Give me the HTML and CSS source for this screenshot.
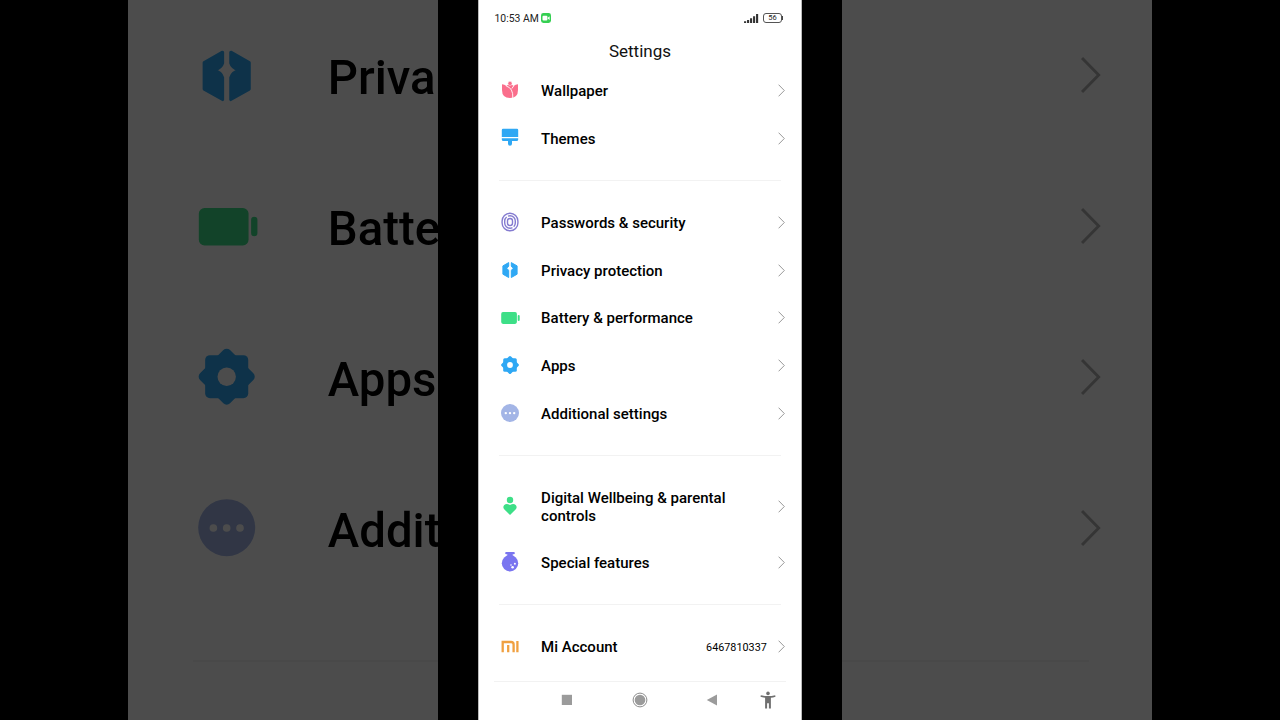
FILE: index.html
```
<!DOCTYPE html>
<html lang="en">

<head>
    <meta charset="UTF-8">
    <title>Settings</title>
    <link rel="stylesheet" href="styles.css">
</head>

<body>
    <!-- Icons used more than once -->
    <svg class="defs" width="0" height="0">
        <symbol id="privacy" viewBox="-10 -10 20 20">
            <path fill="#2fa8f4" stroke="#2fa8f4" stroke-width="1" stroke-linejoin="round"
                d="M-1.3-7.4L-7.1-4.1V4.2L-1.3 7.5V.6Q-1.7-1-4-1.7Q-1.7-2.5-1.3-4ZM1.3-7.4L7.1-4.1V4.2L1.3 7.5V.6Q1.7-1 4-1.7Q1.7-2.5 1.3-4Z" />
        </symbol>
        <symbol id="battery" viewBox="-10 -10 20 20">
            <rect x="-8.8" y="-5.9" width="15.7" height="11.8" rx="1.8" fill="#3ddf87" />
            <rect x="7.7" y="-3.1" width="2" height="6.1" rx="1" fill="#3ddf87" />
        </symbol>
        <symbol id="gear" viewBox="-10 -10 20 20">
            <g fill="#2fa8f4">
                <rect x="-6.8" y="-6.8" width="13.6" height="13.6" rx="1.5" />
                <rect x="-6.7" y="-6.7" width="13.4" height="13.4" rx="1.5" transform="rotate(45)" />
            </g>
            <circle r="2.9" fill="#fff" />
        </symbol>
        <symbol id="dots" viewBox="-10 -10 20 20">
            <circle r="9" fill="#a3b5e6" />
            <g fill="#fff">
                <circle cx="-4.2" cy=".1" r="1.2" />
                <circle cx="0" cy=".1" r="1.2" />
                <circle cx="4.2" cy=".1" r="1.2" />
            </g>
        </symbol>
        <symbol id="arrow" viewBox="0 0 7 13">
            <path d="M.6 .7L6.3 6.5L.6 12.3" fill="none" stroke="currentColor" stroke-width="1" />
        </symbol>
    </svg>

    <div class="stage">
        <div class="side side-left">
            <div class="big-row"><svg class="big-icon"><use href="#privacy" /></svg><span>Priva</span></div>
            <div class="big-row"><svg class="big-icon"><use href="#battery" /></svg><span>Batte</span></div>
            <div class="big-row"><svg class="big-icon"><use href="#gear" /></svg><span>Apps</span></div>
            <div class="big-row"><svg class="big-icon"><use href="#dots" /></svg><span>Addit</span></div>
            <div class="big-line"></div>
        </div>

        <div class="phone">
            <div class="status">
                <span class="time">10:53 AM</span>
                <svg class="cam" viewBox="0 0 10 10">
                    <rect width="10" height="10" rx="2.4" fill="#35cf52" />
                    <rect x="1.5" y="2.7" width="4.9" height="4.7" rx="1" fill="#fff" />
                    <path d="M6.7 4.7L8.6 3.3V6.9L6.7 5.5Z" fill="#fff" />
                </svg>
                <svg class="signal" viewBox="0 0 15 10">
                    <path d="M1.1 10V8.3M4.1 10V7M7.1 10V5.2M10.1 10V3.2M13.1 10V1" stroke="#333" stroke-width="2.1" />
                </svg>
                <div class="charge">56</div>
                <div class="charge-tip"></div>
            </div>
            <h1>Settings</h1>

            <div class="row">
                <svg class="icon" viewBox="-10 -10 20 20">
                    <path fill="#fa6e8c" d="M-8-5.7Q-5.5-5.5-3.6-4Q-2-5.4 0-5.4T3.6-4Q5.5-5.5 8-5.7V0Q8 8 0 8T-8 0Z" />
                    <path d="M-3.8-4Q3.4-2 2.8 8.2M3.8-4.2L1.8-1.4" fill="none" stroke="#fff" stroke-width=".9" />
                    <circle cx="0" cy="-6.6" r="2.1" fill="#fa6e8c" stroke="#fff" stroke-width=".5" />
                </svg>
                <span>Wallpaper</span><svg class="arrow"><use href="#arrow" /></svg>
            </div>
            <div class="row">
                <svg class="icon" viewBox="-10 -10 20 20">
                    <g fill="#2fa8f4">
                        <path d="M-8.2-8Q-8.2-9.2-7-9.2H7Q8.2-9.2 8.2-8V-.9H-8.2Z" />
                        <path d="M-8.2 .3H8.2V1.5Q8.2 3.1 6.6 3.1H2V5.8Q2 7.8 0 7.8T-2 5.8V3.1H-6.6Q-8.2 3.1-8.2 1.5Z" />
                    </g>
                </svg>
                <span>Themes</span><svg class="arrow"><use href="#arrow" /></svg>
            </div>
            <div class="line"></div>

            <div class="row">
                <svg class="icon" viewBox="-10 -10 20 20">
                    <g fill="none" stroke="#847bd0" stroke-width="1.4">
                        <rect x="-7.9" y="-8.8" width="15.8" height="17.6" rx="7.9" />
                        <rect x="-5.3" y="-6.2" width="10.6" height="12.4" rx="5.3" stroke-dasharray="14 1.5 17 1.5" />
                        <rect x="-2.5" y="-3.5" width="5" height="7" rx="2.5" />
                    </g>
                </svg>
                <span>Passwords &amp; security</span><svg class="arrow"><use href="#arrow" /></svg>
            </div>
            <div class="row"><svg class="icon"><use href="#privacy" /></svg><span>Privacy protection</span><svg class="arrow"><use href="#arrow" /></svg></div>
            <div class="row"><svg class="icon"><use href="#battery" /></svg><span>Battery &amp; performance</span><svg class="arrow"><use href="#arrow" /></svg></div>
            <div class="row"><svg class="icon"><use href="#gear" /></svg><span>Apps</span><svg class="arrow"><use href="#arrow" /></svg></div>
            <div class="row"><svg class="icon"><use href="#dots" /></svg><span>Additional settings</span><svg class="arrow"><use href="#arrow" /></svg></div>
            <div class="line"></div>

            <div class="row tall">
                <svg class="icon" viewBox="-10 -10 20 20">
                    <g fill="#3ddf87">
                        <circle cx="0" cy="-6" r="3.2" />
                        <path d="M0 9L-5.8 3.3C-8.4 .2-4.6-4 0-.9C4.6-4 8.4 .2 5.8 3.3Z" />
                    </g>
                </svg>
                <span>Digital Wellbeing &amp; parental controls</span><svg class="arrow"><use href="#arrow" /></svg>
            </div>
            <div class="row">
                <svg class="icon" viewBox="-10 -10 20 20">
                    <g fill="#7a75f0">
                        <rect x="-4.8" y="-10" width="9.6" height="2.2" rx=".9" />
                        <rect x="-2.7" y="-9" width="5.4" height="4" />
                        <circle cx="0" cy="1.2" r="8.2" />
                    </g>
                    <g fill="#fff">
                        <circle cx="4.9" cy="1.8" r="1" />
                        <circle cx="1" cy="3" r=".8" />
                        <circle cx="2.6" cy="5.2" r="1.3" />
                    </g>
                </svg>
                <span>Special features</span><svg class="arrow"><use href="#arrow" /></svg>
            </div>
            <div class="line"></div>

            <div class="row">
                <svg class="icon" viewBox="-10 -10 20 20">
                    <path d="M-7.3 5.2V-5H1Q3.6-5 3.6-2.4V5.2M-1.8 5.2V-2M7.4 5.2V-6.1" fill="none" stroke="#f0a040" stroke-width="2.3" />
                </svg>
                <span>Mi Account</span><em>6467810337</em><svg class="arrow"><use href="#arrow" /></svg>
            </div>

            <div class="nav">
                <svg width="12" height="12"><rect x=".8" y=".8" width="10.2" height="10.2" fill="#9b9b9b" /></svg>
                <svg width="16" height="16">
                    <circle cx="8" cy="8" r="6.9" fill="none" stroke="#8d8d8d" />
                    <circle cx="8" cy="8" r="5.3" fill="#9b9b9b" />
                </svg>
                <svg width="12" height="12"><path d="M.8 6L11 .4V11.6Z" fill="#9b9b9b" /></svg>
                <svg width="16" height="18" fill="#707070">
                    <circle cx="8" cy="2.4" r="1.8" />
                    <path d="M.8 4.2Q8 6 15.2 4.2L15.5 5.7Q13 6.5 10.9 6.7V17.4H8.9V12.3H7.1V17.4H5.1V6.7Q3 6.5 .5 5.7Z" />
                </svg>
            </div>
        </div>

        <div class="side side-right">
            <div class="big-row"><svg class="big-arrow"><use href="#arrow" /></svg></div>
            <div class="big-row"><svg class="big-arrow"><use href="#arrow" /></svg></div>
            <div class="big-row"><svg class="big-arrow"><use href="#arrow" /></svg></div>
            <div class="big-row"><svg class="big-arrow"><use href="#arrow" /></svg></div>
            <div class="big-line"></div>
        </div>
    </div>
</body>

</html>
```
FILE: styles.css
```
* {
    box-sizing: border-box;
}

body {
    margin: 0;
    background-color: #000;
    font-family: Roboto, sans-serif;
    color: #000;
}

svg {
    display: block;
    flex-shrink: 0;
}

.defs {
    position: absolute;
}

.stage {
    display: flex;
    justify-content: center;
    gap: 40px;
    height: 720px;
    overflow: hidden;
}

/* dimmed side panels */
.side {
    width: 310px;
    background-color: #fff;
    filter: brightness(0.3);
    overflow: hidden;
}

.big-row {
    display: flex;
    align-items: center;
    height: 150.8px;
    font-size: 47.4px;
    font-weight: 500;
    white-space: nowrap;
}

.side-left .big-row {
    padding-left: 67px;
}

.big-row span {
    margin-left: 69.4px;
    padding-top: 6px;
}

.big-icon {
    width: 63.4px;
    height: 63.4px;
}

.side-right .big-row {
    justify-content: flex-end;
    padding-right: 51.5px;
}

.big-arrow {
    width: 21px;
    height: 38px;
    color: #b0b0b0;
}

.big-line {
    height: 2px;
    margin-top: 57px;
    background-color: #f3f3f3;
}

.side-left .big-line {
    margin-left: 65px;
}

.side-right .big-line {
    margin-right: 63px;
}

.phone {
    width: 324px;
    background-color: #fff;
    border-left: 1px solid #bbb;
    border-right: 1px solid #bbb;
}

.status {
    display: flex;
    align-items: center;
    height: 36px;
    padding: 0 18px 0 15.5px;
    font-size: 10.4px;
    color: #222;
}

.cam {
    width: 10px;
    height: 10px;
    margin-left: 2.5px;
}

.signal {
    width: 15px;
    height: 10px;
    margin-left: auto;
}

.charge {
    width: 19px;
    height: 10px;
    margin-left: 4px;
    border: 1px solid #555;
    border-radius: 3px;
    font-size: 7.5px;
    line-height: 8.5px;
    text-align: center;
}

.charge-tip {
    width: 1px;
    height: 4px;
    background-color: #444;
}

h1 {
    height: 31px;
    margin: 0;
    font-size: 17px;
    font-weight: 400;
    line-height: 31px;
    text-align: center;
    color: #111;
}

.row {
    display: flex;
    align-items: center;
    height: 47.7px;
    padding: 0 16px 0 20.6px;
    font-size: 15px;
    font-weight: 500;
    line-height: 17.6px;
}

.row span {
    width: 200px;
    margin-left: 21.5px;
    padding-top: 2px;
}

.row em {
    margin-left: -35px;
    padding-top: 1px;
    font-size: 10.8px;
    font-style: normal;
    font-weight: 400;
}

.tall {
    height: 65px;
}

.icon {
    width: 20px;
    height: 20px;
    margin-top: -1px;
}

.arrow {
    width: 7px;
    height: 13px;
    margin-top: -1px;
    margin-left: auto;
    color: #999;
}

.line {
    height: 1px;
    margin: 17.6px 20px 18px;
    background-color: #f2f2f2;
}

.nav {
    display: grid;
    grid-template-columns: 73px 74px 70px 42px;
    align-items: center;
    justify-items: center;
    height: 38px;
    margin: 10px 15px 0;
    padding-left: 36px;
    border-top: 1px solid #f2f2f2;
}
```
